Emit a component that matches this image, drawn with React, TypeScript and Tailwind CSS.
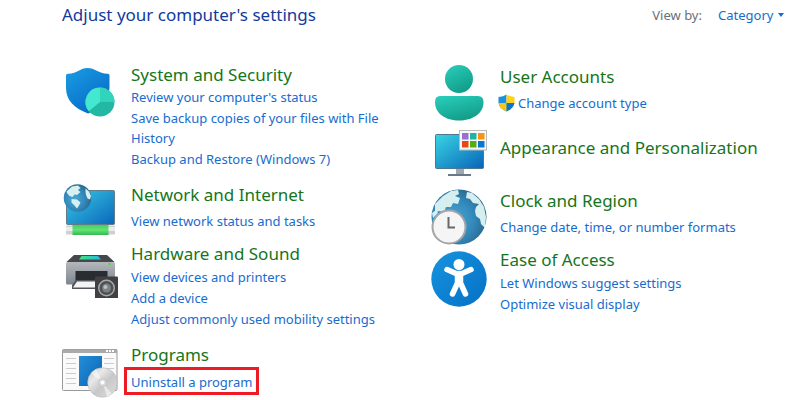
import type { ReactNode } from "react";

function Globe({ id }: { id: string }) {
  return (
    <>
      <defs>
        <radialGradient id={id} cx="0.4" cy="0.55" r="0.65">
          <stop offset="0" stopColor="#4ba9d8" />
          <stop offset="0.6" stopColor="#3186b8" />
          <stop offset="1" stopColor="#2b607f" />
        </radialGradient>
      </defs>
      <circle cx="28" cy="28" r="27.5" fill={`url(#${id})`} />
    </>
  );
}

function ShieldIcon() {
  return (
    <svg viewBox="0 0 56 56" className="size-14 shrink-0" aria-hidden="true">
      <defs>
        <linearGradient id="shield" x1="0" y1="0" x2="0.7" y2="1">
          <stop offset="0" stopColor="#1b9de2" />
          <stop offset="1" stopColor="#0669c8" />
        </linearGradient>
      </defs>
      <path d="M4 12.5Q4 10.8 6 10.7C16 10.5 18 5 25.500 5S36 10.500 46 10.700Q47.500 10.800 47.500 12.500V24C47.500 37 39 46 26 50.500C12 45 4 37 4 25Z" fill="url(#shield)" />
      <circle cx="38" cy="39" r="14.500" fill="#23b8a4" />
      <path d="M38 39V24.500A14.500 14.500 0 0 0 26.800 48.200Z" fill="#42e8cf" />
      <path d="M38 39V24.500A14.500 14.500 0 0 1 52.500 39Z" fill="#31d3ba" />
    </svg>
  );
}

function NetworkIcon() {
  return (
    <svg viewBox="0 0 56 56" className="size-14 shrink-0" aria-hidden="true">
      <defs>
        <linearGradient id="net-screen" x1="0" y1="0" x2="1" y2="1">
          <stop offset="0" stopColor="#39cbe7" />
          <stop offset="1" stopColor="#0a66ba" />
        </linearGradient>
        <linearGradient id="net-cable" x1="0" y1="0" x2="0" y2="1">
          <stop offset="0" stopColor="#43cf61" />
          <stop offset="0.5" stopColor="#61e473" />
          <stop offset="1" stopColor="#36b752" />
        </linearGradient>
      </defs>
      <rect x="4.500" y="7.500" width="48" height="34" rx="1" fill="url(#net-screen)" stroke="#607c88" />
      <rect x="4" y="42.500" width="49" height="9" rx="1" fill="#cfcfcf" />
      <rect x="4" y="44" width="49" height="4" fill="#ebebeb" />
      <rect x="10.500" y="42" width="36" height="10" fill="url(#net-cable)" />
      <g transform="translate(1.500 1) scale(.5)">
        <Globe id="net-globe" />
        <path d="M6 15L17 5 29 3 34 8 29 12 34 16 27 22 22 21 18 26 12 24 7 18ZM16 30L27 31 34 37 31 43 27 49 21 42 16 37ZM44 9L51 15 55 24 53 31 48 29 45 22 44 16Z" fill="#d9f0f0" />
      </g>
    </svg>
  );
}

function HardwareIcon() {
  return (
    <svg viewBox="0 0 56 56" className="size-14 shrink-0" aria-hidden="true">
      <defs>
        <linearGradient id="printer" x1="0" y1="0" x2="0" y2="1">
          <stop offset="0" stopColor="#b4b8bd" />
          <stop offset="1" stopColor="#7e858d" />
        </linearGradient>
        <linearGradient id="printer-glass">
          <stop offset="0" stopColor="#3fe67a" />
          <stop offset="1" stopColor="#26b7e5" />
        </linearGradient>
      </defs>
      <path d="M12 13H45L52.500 20H4.500Z" fill="#45484d" />
      <path d="M19.500 14H36L39 17.500H17Z" fill="url(#printer-glass)" />
      <rect x="4" y="20" width="49" height="22.500" rx="1.500" fill="url(#printer)" />
      <rect x="13.500" y="29" width="32" height="10.500" fill="#292c30" />
      <path d="M14 38H34V47H10V43Z" fill="#53565b" />
      <path d="M15 39.500H34V45.500H11Z" fill="#f3f4f5" />
      <circle cx="47.500" cy="22" r="1.200" fill="#52d83a" />
      <rect x="33" y="34.500" width="23" height="23" rx="1" fill="#414143" />
      <circle cx="44.500" cy="46" r="8.500" fill="#a7a9aa" />
      <circle cx="44.500" cy="46" r="7" fill="#4c5053" />
      <circle cx="44.500" cy="46" r="4.500" fill="#7b8185" />
      <circle cx="43.500" cy="45" r="2" fill="#b9bec0" />
    </svg>
  );
}

function ProgramsIcon() {
  return (
    <svg viewBox="0 0 56 56" className="size-14 shrink-0" aria-hidden="true">
      <defs>
        <linearGradient id="disc" x1="0" y1="0" x2="1" y2="1">
          <stop offset="0" stopColor="#c2c2c2" />
          <stop offset="0.3" stopColor="#e9e9e9" />
          <stop offset="0.55" stopColor="#c8c8c8" />
          <stop offset="1" stopColor="#dedede" />
        </linearGradient>
        <linearGradient id="program" x1="0" y1="0" x2="1" y2="1">
          <stop offset="0" stopColor="#258fd9" />
          <stop offset="1" stopColor="#0864b3" />
        </linearGradient>
      </defs>
      <rect x="0.500" y="6.500" width="54.500" height="41" rx="1" fill="#fafafa" stroke="#999" />
      <path d="M0.500 6.500H55V10H0.500Z" fill="#aaa" />
      <path d="M44 8H53" stroke="#fff" strokeWidth="2" strokeDasharray="2 1" />
      <path d="M4 15.500H14M4 20.500H14M4 25.500H14M4 30.500H14M4 35.500H14M4 40.500H14M42 15.500H52M42 20.500H52M42 25.500H52" stroke="#ccc" />
      <rect x="17" y="13" width="23" height="30" fill="url(#program)" />
      <circle cx="40.500" cy="39.500" r="14.800" fill="url(#disc)" stroke="#b9b9b9" strokeWidth=".6" />
      <path d="M40.500 39.500L29 30 34 26ZM40.500 39.500L50 51 45 54Z" fill="#fff" opacity=".5" />
      <circle cx="40.500" cy="39.500" r="4" fill="#ddd" stroke="#bbb" strokeWidth=".7" />
      <circle cx="40.500" cy="39.500" r="1.800" fill="#fff" />
    </svg>
  );
}

function UserIcon() {
  return (
    <svg viewBox="0 0 56 56" className="size-14 shrink-0" aria-hidden="true">
      <defs>
        <linearGradient id="user" x1="0.200" y1="0" x2="0.700" y2="1">
          <stop offset="0" stopColor="#28ccb9" />
          <stop offset="1" stopColor="#119a87" />
        </linearGradient>
      </defs>
      <circle cx="28" cy="14" r="14" fill="url(#user)" />
      <path d="M9 31H47Q52.500 31 52.500 37C52.500 49 41 55.500 28 55.500S4 49 4 37Q4 31 9 31Z" fill="url(#user)" />
    </svg>
  );
}

function AppearanceIcon() {
  return (
    <svg viewBox="0 0 56 56" className="size-14 shrink-0" aria-hidden="true">
      <defs>
        <linearGradient id="monitor" x1="0" y1="0" x2="1" y2="1">
          <stop offset="0" stopColor="#39d5e4" />
          <stop offset="1" stopColor="#0864b7" />
        </linearGradient>
      </defs>
      <path d="M25 39H33V46H25Z" fill="#9caab5" />
      <path d="M17 45H40V47H17Z" fill="#697987" />
      <rect x="4.500" y="5.500" width="48" height="34" rx="1" fill="url(#monitor)" stroke="#4d7890" />
      <rect x="28.500" y="1.500" width="27" height="19.500" fill="#f8f8f8" stroke="#b8bbbd" />
      <path d="M31 4H37.500V10.500H31Z" fill="#9c6bd3" />
      <path d="M39 4H45.500V10.500H39Z" fill="#1bb5a5" />
      <path d="M47 4H53.500V10.500H47Z" fill="#f39412" />
      <path d="M31 12H37.500V18.500H31Z" fill="#e24b13" />
      <path d="M39 12H45.500V18.500H39Z" fill="#53ae0e" />
      <path d="M47 12H53.500V18.500H47Z" fill="#0877d2" />
    </svg>
  );
}

function ClockIcon() {
  return (
    <svg viewBox="0 0 56 56" className="size-14 shrink-0" aria-hidden="true">
      <Globe id="clock-globe" />
      <path d="M4 15L12 7 20 2 27 1 28 5 24 7 29 9 27 15 22 14 20 18 15 18 13 23 8 22 4 24ZM36 3L41 4 48 10 53 18 55 28 54 39 50 35 49 30 45 27 44 22 45 18 48 15 42 14 39 10 35 9ZM1 24L5 21 7 24 2 29Z" fill="#d5eff0" />
      <circle cx="18" cy="38" r="16.500" fill="#f5f5f6" stroke="#a4a4a6" strokeWidth="2" />
      <path d="M17.500 28V38.500H24" fill="none" stroke="#65686c" strokeWidth="2" />
    </svg>
  );
}

function AccessIcon() {
  return (
    <svg viewBox="0 0 56 56" className="mt-[3px] size-14 shrink-0" aria-hidden="true">
      <defs>
        <linearGradient id="access" x1="0" y1="0" x2="1" y2="1">
          <stop offset="0" stopColor="#1694df" />
          <stop offset="1" stopColor="#0670c5" />
        </linearGradient>
      </defs>
      <circle cx="28" cy="28" r="27.700" fill="url(#access)" />
      <circle cx="28" cy="13.500" r="5.500" fill="#fff" />
      <path d="M16 18.500L25 22.500H31L40 18.500M26.500 23V32L21.500 43M29.500 23V32L34.500 43" fill="none" stroke="#fff" strokeWidth="5.500" strokeLinecap="round" strokeLinejoin="round" />
      <path d="M24 22H32V33H24Z" fill="#fff" />
    </svg>
  );
}

function AdminShield() {
  return (
    <svg viewBox="0 0 17 18" className="-ml-0.5 h-[18px] w-[17px] shrink-0" aria-hidden="true">
      <path d="M8.500 0.500Q5.500 2.500 0.500 3V8C0.500 12.500 4 15.500 8.500 17.500Z" fill="#1692df" />
      <path d="M8.500 0.500Q11.500 2.500 16.500 3V8C16.500 12.500 13 15.500 8.500 17.500Z" fill="#ffd11b" />
      <path d="M0.600 9H8.500V17.500C4 15.500 1 12.500 0.600 9Z" fill="#fcc313" />
      <path d="M8.500 9H16.400C16 12.500 13 15.500 8.500 17.500Z" fill="#0878c8" />
    </svg>
  );
}

function Category({
  icon,
  title,
  links = [],
  badge,
  className = "",
  titleClass = "",
  linksClass = "",
}: {
  icon: ReactNode;
  title: string;
  links?: string[];
  badge?: ReactNode;
  className?: string;
  titleClass?: string;
  linksClass?: string;
}) {
  return (
    <section className={`flex items-start gap-[13px] ${className}`}>
      {icon}
      <div className="min-w-0 flex-1">
        <h2 className={`text-[17px] leading-6 text-[#15751a] ${titleClass}`}>
          <a href="#">{title}</a>
        </h2>
        {links.length > 0 && (
          <ul className={`flex flex-col gap-px text-[13px] leading-5 text-[#176ccf] ${linksClass}`}>
            {links.map((link) => (
              <li key={link} className="flex items-center gap-[3px]">
                {badge}
                <a href="#">{link}</a>
              </li>
            ))}
          </ul>
        )}
      </div>
    </section>
  );
}

export default function App() {
  return (
    <main className="min-h-screen bg-white pr-4 pl-[62px] font-['Noto_Sans','Open_Sans',sans-serif]">
      <header className="flex h-[63px] items-start justify-between pt-[3px]">
        <h1 className="text-[17px] leading-6 text-[#123a9c]">Adjust your computer's settings</h1>
        <div className="flex items-center text-[13px] leading-6">
          <label htmlFor="view" className="mr-4 text-[#697078]">View by:</label>
          <select id="view" className="appearance-none bg-transparent text-[#176ccf]">
            <option>Category</option>
          </select>
          <svg viewBox="0 0 6 4" className="ml-1 h-1 w-1.5" aria-hidden="true">
            <path d="M0 0H6L3 4Z" fill="#176ccf" />
          </svg>
        </div>
      </header>
      <div className="grid grid-cols-2 gap-4">
        <div>
          <Category
            icon={<ShieldIcon />}
            title="System and Security"
            links={["Review your computer's status", "Save backup copies of your files with File History", "Backup and Restore (Windows 7)"]}
          />
          <Category className="mt-3.5" icon={<NetworkIcon />} title="Network and Internet" links={["View network status and tasks"]} linksClass="mt-1" />
          <Category
            className="mt-[3px]"
            icon={<HardwareIcon />}
            title="Hardware and Sound"
            links={["View devices and printers", "Add a device", "Adjust commonly used mobility settings"]}
            linksClass="mt-px"
          />
          <Category
            className="mt-3.5"
            icon={<ProgramsIcon />}
            title="Programs"
            links={["Uninstall a program"]}
            linksClass="-ml-[7px] w-fit border-3 border-[#ed1c24] px-1 pt-0.5"
          />
        </div>
        <div className="pt-0.5">
          <Category icon={<UserIcon />} title="User Accounts" links={["Change account type"]} badge={<AdminShield />} linksClass="mt-1" />
          <Category className="mt-2" icon={<AppearanceIcon />} title="Appearance and Personalization" titleClass="pt-[7px]" />
          <Category className="mt-1" icon={<ClockIcon />} title="Clock and Region" links={["Change date, time, or number formats"]} linksClass="mt-1" />
          <Category className="mt-[3px]" icon={<AccessIcon />} title="Ease of Access" links={["Let Windows suggest settings", "Optimize visual display"]} linksClass="mt-px" />
        </div>
      </div>
    </main>
  );
}
